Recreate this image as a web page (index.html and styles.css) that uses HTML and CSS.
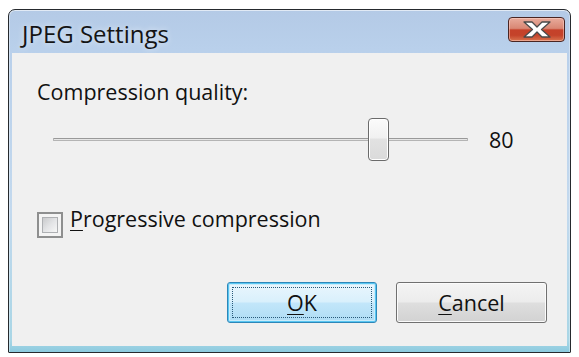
FILE: index.html
```html
<!DOCTYPE html>
<html>
<head>
<meta charset="utf-8">
<link rel="stylesheet" href="styles.css">
</head>
<body>
<div class="window">
  <div class="titlebar">
    <span class="title">JPEG Settings</span>
    <div class="close">
      <svg width="28" height="17" viewBox="0 0 28 17">
        <polygon points="1,1 9,1 14,6 19,1 27,1 18.5,8.5 27,16 19,16 14,11 9,16 1,16 9.5,8.5" fill="#ffffff" stroke="#4a4a4a" stroke-width="1.3" stroke-linejoin="round"/>
      </svg>
    </div>
  </div>
  <div class="client">
    <div class="label">Compression quality:</div>
    <div class="slider-row">
      <div class="slider">
        <div class="track"></div>
        <div class="thumb" style="left:75.9%"></div>
      </div>
      <span class="value">80</span>
    </div>
    <div class="check-row">
      <span class="box"><span class="box-inner"></span></span>
      <span class="check-label"><u>P</u>rogressive compression</span>
    </div>
    <div class="buttons">
      <div class="btn btn-default"><span><u>O</u>K</span></div>
      <div class="btn"><span><u>C</u>ancel</span></div>
    </div>
  </div>
</div>
</body>
</html>
```
FILE: styles.css
```css
html, body {
  margin: 0;
  padding: 0;
  background: #ffffff;
}
body {
  font-family: "Open Sans", "Noto Sans", sans-serif;
  font-size: 21.5px;
  color: #111;
}
.window {
  margin: 9px 0 0 8px;
  width: 563px;
  height: 344px;
  box-sizing: border-box;
  border: 1px solid #262a2e;
  border-radius: 7px 7px 1px 1px;
  background: linear-gradient(#b4cae6 0, #b9d0eb 40px, #c3d9ee 200px, #a9d6e6 330px, #8ccbdf 100%);
  padding: 0 3px 6px 3px;
  display: flex;
  flex-direction: column;
  box-shadow: inset 0 1px 0 rgba(255,255,255,0.6), inset 1px 0 0 rgba(255,255,255,0.35), inset -1px 0 0 rgba(255,255,255,0.35);
}
.titlebar {
  height: 43px;
  flex: none;
  display: flex;
  justify-content: space-between;
  align-items: flex-start;
}
.title {
  margin: 9px 0 0 10px;
  font-size: 24px;
  line-height: 30px;
  color: #141414;
  text-shadow: 0 0 6px rgba(255,255,255,0.7);
}
.close {
  margin: 7px 2px 0 0;
  width: 57px;
  height: 25px;
  box-sizing: border-box;
  border: 1px solid #4a2522;
  border-radius: 4px;
  background: linear-gradient(#e8ab9c 0, #d98774 45%, #c5412a 52%, #c4432a 75%, #d9744f 100%);
  box-shadow: inset 0 0 0 1px rgba(255,215,205,0.5);
  display: flex;
  align-items: center;
  justify-content: center;
}
.close svg {
  display: block;
}
.client {
  flex: 1;
  background: #f0f0f0;
  padding: 25px 20px 0 25px;
  display: flex;
  flex-direction: column;
}
.label {
  line-height: 28px;
}
.slider-row {
  margin-top: 12px;
  height: 43px;
  display: flex;
  align-items: center;
}
.slider {
  position: relative;
  margin-left: 16px;
  width: 415px;
  height: 43px;
  display: flex;
  align-items: center;
}
.track {
  width: 100%;
  height: 3px;
  box-sizing: border-box;
  border: 1px solid #b4b4b4;
  border-top-color: #999999;
  background: #e6e6e6;
  border-radius: 1px;
}
.thumb {
  position: absolute;
  top: 0;
  width: 21px;
  height: 43px;
  box-sizing: border-box;
  border: 1px solid #6b6b6b;
  border-radius: 4px;
  background: linear-gradient(#fbfbfb 0, #f1f1f1 45%, #e2e2e2 50%, #dadada 100%);
  box-shadow: inset 0 0 0 1px #ffffff;
}
.value {
  margin-left: 21px;
  line-height: 28px;
}
.check-row {
  margin-top: 44px;
  display: flex;
  align-items: flex-start;
}
.box {
  width: 26px;
  height: 26px;
  box-sizing: border-box;
  margin-top: 7px;
  border: 2px solid #8e8f8f;
  background: #f4f4f4;
  padding: 3px;
  display: flex;
}
.box-inner {
  flex: 1;
  border: 1px solid #aeb0b3;
  background: linear-gradient(135deg, #c9cacc 0, #e3e4e6 50%, #f7f7f7 100%);
}
.check-label {
  margin-left: 7px;
  line-height: 28px;
}
.buttons {
  margin-top: 44px;
  display: flex;
  justify-content: flex-end;
  gap: 19px;
}
.btn {
  position: relative;
  width: 151px;
  height: 41px;
  box-sizing: border-box;
  border: 1px solid #707070;
  border-radius: 3px;
  background: linear-gradient(#f4f4f4 0, #ececec 48%, #dedede 52%, #d2d2d2 100%);
  box-shadow: inset 0 0 0 1px #fbfbfb;
  display: flex;
  align-items: center;
  justify-content: center;
  line-height: 28px;
}
.btn-default {
  width: 150px;
  border: 1px solid #2e87b8;
  background: linear-gradient(#eaf6fd 0, #d9f0fc 48%, #c2e6fa 52%, #aedcf4 100%);
  box-shadow: inset 0 0 0 1px #58c6f2, inset 0 0 0 2px #c9ecfb;
}
.btn-default::after {
  content: "";
  position: absolute;
  left: 4px;
  top: 4px;
  right: 4px;
  bottom: 4px;
  border: 1px dotted #2a5a7a;
}
u {
  text-decoration: underline;
  text-underline-offset: 3px;
  text-decoration-thickness: 1px;
}
```
